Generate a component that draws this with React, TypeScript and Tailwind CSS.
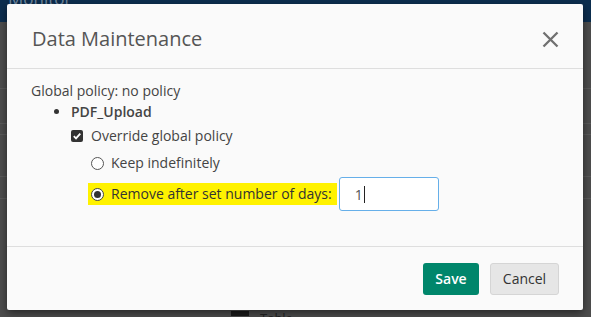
export default function App() {
  return (
    <div
      className="relative w-[591px] h-[317px] overflow-hidden bg-[#4d4d4d]"
      style={{ fontFamily: '"Open Sans", "Noto Sans", sans-serif' }}
    >
      {/* page behind the overlay */}
      <div className="h-[22px] bg-[#0c2e4f] pl-[8px] overflow-hidden">
        <span className="block -mt-[9px] text-[17px] leading-[16px] text-[#7389a0]">Monitor</span>
      </div>
      <div className="flex flex-col">
        <div className="h-[67px] border-b border-[#5a5a5a]" />
        <div className="h-[35px] border-b border-[#5a5a5a]" />
        <div className="h-[11px] border-b border-[#5a5a5a]" />
        <div className="h-[42px] border-b border-[#5a5a5a]" />
        <div className="h-[22px] border-b border-[#5a5a5a]" />
      </div>
      <div className="absolute left-[231px] top-[311px] h-[5px] w-[18px] bg-[#1a1a1a]" />
      <div className="absolute left-[260px] top-[309px] text-[13px] text-[#222]">Table</div>

      {/* modal */}
      <div className="absolute left-[7px] top-[4px] w-[576px] h-[306px] bg-[#fafafa] rounded-[2px] shadow-[0_3px_8px_rgba(0,0,0,0.5)] flex flex-col">
        <div className="h-[65px] shrink-0 flex items-center justify-between pt-[6px] pl-[25px] pr-[24px] border-b border-[#dedede]">
          <h2 className="text-[20px] text-[#555]">Data Maintenance</h2>
          <svg width="17" height="17" viewBox="0 0 17 17" className="text-[#707070]">
            <path d="M1.5 1.5L15.5 15.5M15.5 1.5L1.5 15.5" stroke="currentColor" strokeWidth="2.3" />
          </svg>
        </div>

        <div className="flex-1 pl-[24px] pt-[12px] text-[14px] text-[#444]">
          <div className="leading-[20px]">Global policy: no policy</div>
          <ul className="mt-[1px] ml-[40px] list-disc">
            <li className="font-semibold leading-[20px] marker:text-[#333]">PDF_Upload</li>
          </ul>
          <div className="ml-[40px] mt-[4px] flex items-center gap-[8px] leading-[20px]">
            <span className="w-[12px] h-[12px] rounded-[2px] bg-[#333] flex items-center justify-center">
              <svg width="10" height="10" viewBox="0 0 10 10">
                <path d="M1.8 5.2L4 7.4L8.3 2.6" stroke="#fff" strokeWidth="1.8" fill="none" />
              </svg>
            </span>
            Override global policy
          </div>
          <div className="ml-[60px] mt-[7px] flex items-center gap-[7px] leading-[20px]">
            <span className="w-[13px] h-[13px] rounded-full border border-[#555] bg-white" />
            Keep indefinitely
          </div>
          <div className="ml-[57px] mt-[4px] flex items-center">
            <div className="flex items-center gap-[7px] h-[22px] pl-[3px] pr-[5px] bg-[#fff200] leading-[20px] text-[#333]">
              <span className="w-[13px] h-[13px] rounded-full border border-[#444] bg-white flex items-center justify-center">
                <span className="w-[7px] h-[7px] rounded-full bg-[#333]" />
              </span>
              Remove after set number of days:
            </div>
            <div className="ml-[2px] w-[100px] h-[34px] rounded-[3px] border border-[#66afe9] bg-white flex items-center pl-[15px] text-[#555] text-[14px]">
              1<span className="ml-[1px] w-px h-[17px] bg-[#222]" />
            </div>
          </div>
        </div>

        <div className="h-[64px] shrink-0 border-t border-[#dedede] flex items-center justify-end gap-[11px] pr-[24px]">
          <button className="w-[56px] h-[32px] rounded-[3px] bg-[#00866b] text-white text-[14px] font-semibold">Save</button>
          <button className="w-[69px] h-[32px] rounded-[3px] bg-[#e6e6e6] border border-[#d5d5d5] text-[#333] text-[14px]">Cancel</button>
        </div>
      </div>
    </div>
  )
}
